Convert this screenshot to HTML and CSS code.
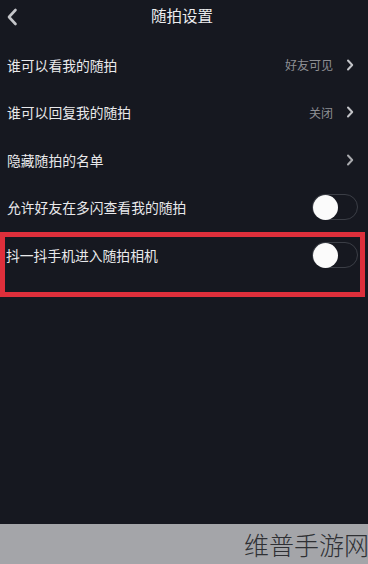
FILE: index.html
```html
<!DOCTYPE html>
<html lang="zh-CN">
<head>
    <meta charset="UTF-8">
    <meta name="viewport" content="width=device-width, initial-scale=1.0">
    <title>随拍设置</title>
    <link rel="stylesheet" href="styles.css">
</head>
<body>
    <div class="screen">
        <div class="header">
            <svg class="back" width="12" height="18" viewBox="0 0 12 18">
                <path d="M9.5 2 L3 9 L9.5 16" fill="none" stroke="#c4c5c9" stroke-width="2.6" stroke-linecap="round" stroke-linejoin="round"/>
            </svg>
            <h1>随拍设置</h1>
            <span></span>
        </div>

        <div class="row">
            <span class="label">谁可以看我的随拍</span>
            <span class="value">好友可见</span>
            <svg class="chevron" width="8" height="12" viewBox="0 0 8 12">
                <path d="M2 1.5 L6.2 6 L2 10.5" fill="none" stroke="#c2c3c7" stroke-width="2" stroke-linecap="round" stroke-linejoin="round"/>
            </svg>
        </div>
        <div class="row">
            <span class="label">谁可以回复我的随拍</span>
            <span class="value">关闭</span>
            <svg class="chevron" width="8" height="12" viewBox="0 0 8 12">
                <path d="M2 1.5 L6.2 6 L2 10.5" fill="none" stroke="#c2c3c7" stroke-width="2" stroke-linecap="round" stroke-linejoin="round"/>
            </svg>
        </div>
        <div class="row">
            <span class="label">隐藏随拍的名单</span>
            <svg class="chevron" width="8" height="12" viewBox="0 0 8 12">
                <path d="M2 1.5 L6.2 6 L2 10.5" fill="none" stroke="#a9aaae" stroke-width="2" stroke-linecap="round" stroke-linejoin="round"/>
            </svg>
        </div>
        <div class="row">
            <span class="label">允许好友在多闪查看我的随拍</span>
            <span class="toggle"><span class="knob"></span></span>
        </div>

        <div class="highlight">
            <div class="row row-marked">
                <span class="label">抖一抖手机进入随拍相机</span>
                <span class="toggle"><span class="knob"></span></span>
            </div>
        </div>
    </div>

    <div class="footer">
        <span class="watermark">维普手游网</span>
    </div>
</body>
</html>
```

FILE: styles.css
```css
* {
    margin: 0;
    padding: 0;
    box-sizing: border-box;
}

body {
    width: 368px;
    height: 564px;
    display: flex;
    flex-direction: column;
    font-family: "Noto Sans CJK SC", "Noto Sans", sans-serif;
    background: #161820;
    color: #e9e9eb;
    overflow: hidden;
}

.screen {
    flex: 1;
    background: #161820;
}

.header {
    height: 41px;
    display: grid;
    grid-template-columns: 40px 1fr 40px;
    align-items: center;
    padding-bottom: 12px;
}

.back {
    margin-left: 6px;
    margin-top: 4px;
}

.header h1 {
    text-align: center;
    font-size: 15.5px;
    font-weight: 400;
    color: #ececee;
    margin-left: -4px;
}

.row {
    height: 47.5px;
    display: flex;
    align-items: center;
    padding: 0 14px 0 7px;
}

.label {
    flex: 1;
    font-size: 13.8px;
    letter-spacing: 0;
}

.value {
    font-size: 12px;
    color: #8e8f94;
    margin-right: 13px;
}

.chevron {
    display: block;
}

.toggle {
    width: 46px;
    height: 26px;
    border: 1.5px solid #3b3e46;
    border-radius: 13px;
    display: flex;
    align-items: center;
    margin-right: -4px;
}

.knob {
    width: 25px;
    height: 25px;
    border-radius: 50%;
    background: #fbfbfb;
    margin-left: 0;
}

.highlight {
    margin-top: 1px;
    margin-right: 3px;
    border: 5px solid #de2f3b;
    padding-bottom: 19px;
}

.row-marked {
    height: 36px;
    padding: 0 6px 0 1px;
}

.footer {
    height: 40px;
    background: #a4a5a9;
    display: flex;
    justify-content: flex-end;
    align-items: center;
}

.watermark {
    font-size: 25px;
    font-weight: 300;
    color: #2f3034;
    letter-spacing: 0;
    margin-right: -1px;
}
```
